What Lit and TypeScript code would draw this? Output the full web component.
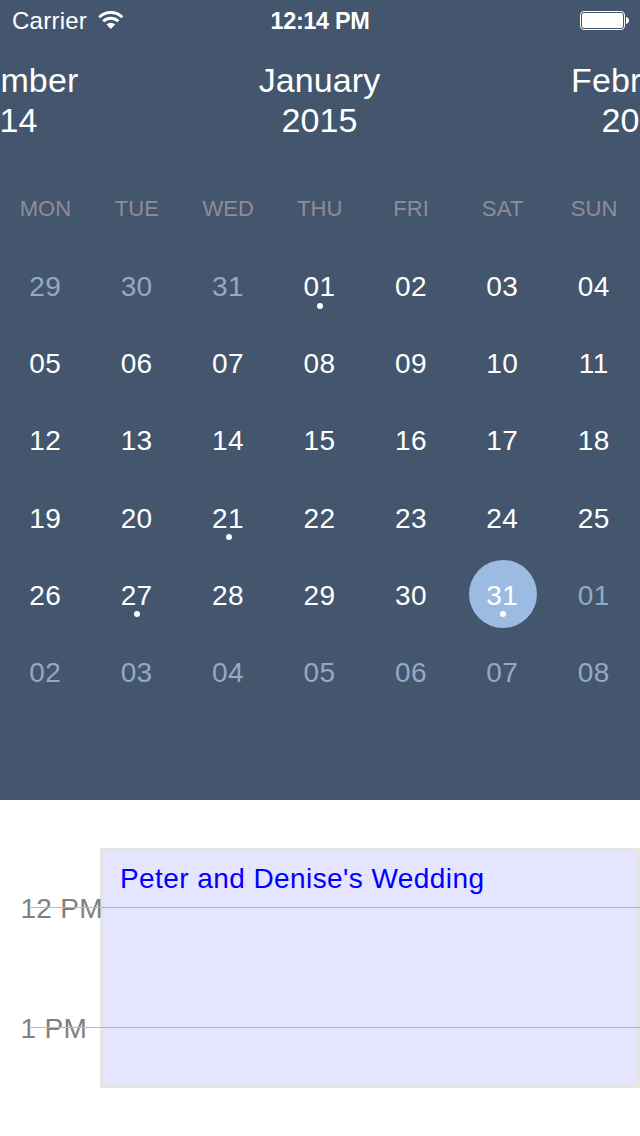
import { LitElement, html, css } from "lit";
import { customElement, property } from "lit/decorators.js";
import { classMap } from "lit/directives/class-map.js";

@customElement("status-bar")
class StatusBar extends LitElement {
  static styles = css`
    :host {
      display: grid;
      grid-template-columns: 1fr auto 1fr;
      align-items: center;
      height: 40px;
      padding: 0 11px 0 12px;
      box-sizing: border-box;
      color: #fff;
      font-size: 24px;
      line-height: 40px;
    }
    .left {
      display: flex;
      align-items: center;
      gap: 11px;
    }
    .carrier,
    .time {
      padding-top: 1px;
      margin-bottom: -1px;
    }
    .carrier {
      letter-spacing: 0.25px;
    }
    .time {
      font-weight: 700;
      font-size: 23.5px;
      letter-spacing: -0.35px;
      padding-right: 1px;
    }
    .battery {
      justify-self: end;
    }
    svg {
      display: block;
    }
  `;
  render() {
    return html`
      <div class="left">
        <span class="carrier">Carrier</span>
        <svg width="26" height="20" viewBox="0 0 26 20" fill="none" stroke="#fff">
          <path d="M1.2 7.2a16.6 16.6 0 0 1 23.2 0" stroke-width="2.9" />
          <path d="M5.2 11.3a10.9 10.9 0 0 1 15.2 0" stroke-width="2.9" />
          <path d="M8.4 14.6a6.3 6.3 0 0 1 8.8 0L12.8 19z" fill="#fff" stroke="none" />
        </svg>
      </div>
      <span class="time">12:14 PM</span>
      <svg class="battery" width="49" height="20" viewBox="0 0 49 20">
        <rect x="0.5" y="1.5" width="44" height="18" rx="3.5" fill="none" stroke="#fff" />
        <rect x="2" y="3" width="41" height="15" rx="2" fill="#fff" />
        <path d="M46 7c2 .3 3 1.700 3 3.500s-1 3.200-3 3.500z" fill="#fff" />
      </svg>
    `;
  }
}

@customElement("month-menu")
class MonthMenu extends LitElement {
  static styles = css`
    :host {
      display: flex;
      justify-content: center;
      height: 130px;
      padding: 20px 1px 0 0;
      box-sizing: border-box;
      overflow: hidden;
      color: #fff;
      font-size: 34px;
      line-height: 40px;
      text-align: center;
    }
    .month {
      flex: 0 0 320px;
      white-space: pre-line;
      letter-spacing: 0.1px;
    }
  `;
  render() {
    return ["December\n2014", "January\n2015", "February\n2015"].map(
      (m) => html`<div class="month">${m}</div>`
    );
  }
}

@customElement("calendar-day")
class CalendarDay extends LitElement {
  @property() label = "";
  @property({ type: Boolean }) outside = false;
  @property({ type: Boolean }) selected = false;
  @property({ type: Boolean }) marked = false;

  static styles = css`
    :host {
      display: flex;
      align-items: center;
      justify-content: center;
    }
    .disc {
      display: grid;
      place-items: center;
      position: relative;
      width: 68px;
      height: 68px;
      border-radius: 50%;
      color: #fff;
      font-size: 28px;
      line-height: 32px;
    }
    .num {
      letter-spacing: 0.4px;
      padding: 3px 1px 0 0;
    }
    .outside {
      color: #93a9c5;
    }
    .selected {
      background: #9bbbe3;
    }
    .dot {
      position: absolute;
      left: 31px;
      bottom: 11px;
      width: 6px;
      height: 6px;
      border-radius: 50%;
      background: #fff;
    }
  `;
  render() {
    return html`<div class=${classMap({ disc: true, outside: this.outside, selected: this.selected })}>
      <span class="num">${this.label}</span>
      ${this.marked ? html`<i class="dot"></i>` : null}
    </div>`;
  }
}

@customElement("month-grid")
class MonthGrid extends LitElement {
  static styles = css`
    :host {
      display: grid;
      grid-template-columns: repeat(7, 1fr);
      grid-template-rows: repeat(7, 1fr);
      height: 540px;
    }
    .weekday {
      display: flex;
      align-items: center;
      justify-content: center;
      padding-right: 0.5px;
      color: #8f8c99;
      font-size: 22px;
      letter-spacing: 0.1px;
    }
  `;
  render() {
    const marked = [1, 21, 27, 31];
    const days = Array.from({ length: 42 }, (_, i) => {
      const n = i - 2;
      const outside = n < 1 || n > 31;
      const value = n < 1 ? n + 31 : n > 31 ? n - 31 : n;
      return { n, outside, label: String(value).padStart(2, "0") };
    });
    return html`
      ${["MON", "TUE", "WED", "THU", "FRI", "SAT", "SUN"].map(
        (w) => html`<div class="weekday">${w}</div>`
      )}
      ${days.map(
        (d) => html`<calendar-day
          .label=${d.label}
          .outside=${d.outside}
          .selected=${d.n === 31}
          .marked=${marked.includes(d.n)}
        ></calendar-day>`
      )}
    `;
  }
}

@customElement("day-timeline")
class DayTimeline extends LitElement {
  static styles = css`
    :host {
      display: grid;
      grid-template: 336px / 640px;
      background: #fff;
      overflow: hidden;
    }
    .hours,
    .event,
    .lines {
      grid-area: 1 / 1;
    }
    .hours {
      padding: 49px 0 0 20.5px;
      color: #808080;
      font-size: 28px;
      letter-spacing: 0.3px;
    }
    .hour {
      height: 120px;
      line-height: 120px;
    }
    .event {
      margin: 48px 0 0 100px;
      height: 240px;
      box-sizing: border-box;
      border: 4px solid #e5e5e5;
      background: #e5e5ff;
      padding: 11px 16px;
      color: #0000ff;
      font-size: 28px;
      line-height: 32px;
    }
    .title {
      letter-spacing: 0.42px;
    }
    .lines {
      padding: 107px 0 0 29px;
    }
    .line {
      height: 1px;
      margin-bottom: 119px;
      background: linear-gradient(to right, #b8b8b8 73px, #b2b0c8 73px);
    }
  `;
  render() {
    const hours = ["12 PM", "1 PM"];
    return html`
      <div class="event"><span class="title">Peter and Denise's Wedding</span></div>
      <div class="hours">${hours.map((h) => html`<div class="hour">${h}</div>`)}</div>
      <div class="lines">${hours.map(() => html`<div class="line"></div>`)}</div>
    `;
  }
}

@customElement("app-root")
class AppRoot extends LitElement {
  static styles = css`
    :host {
      display: block;
      width: 640px;
      height: 1136px;
      overflow: hidden;
      background: #fff;
      font-family: "Liberation Sans", Arial, sans-serif;
    }
    .calendar {
      height: 800px;
      background: #43566d;
    }
  `;
  render() {
    return html`
      <div class="calendar">
        <status-bar></status-bar>
        <month-menu></month-menu>
        <month-grid></month-grid>
      </div>
      <day-timeline></day-timeline>
    `;
  }
}
